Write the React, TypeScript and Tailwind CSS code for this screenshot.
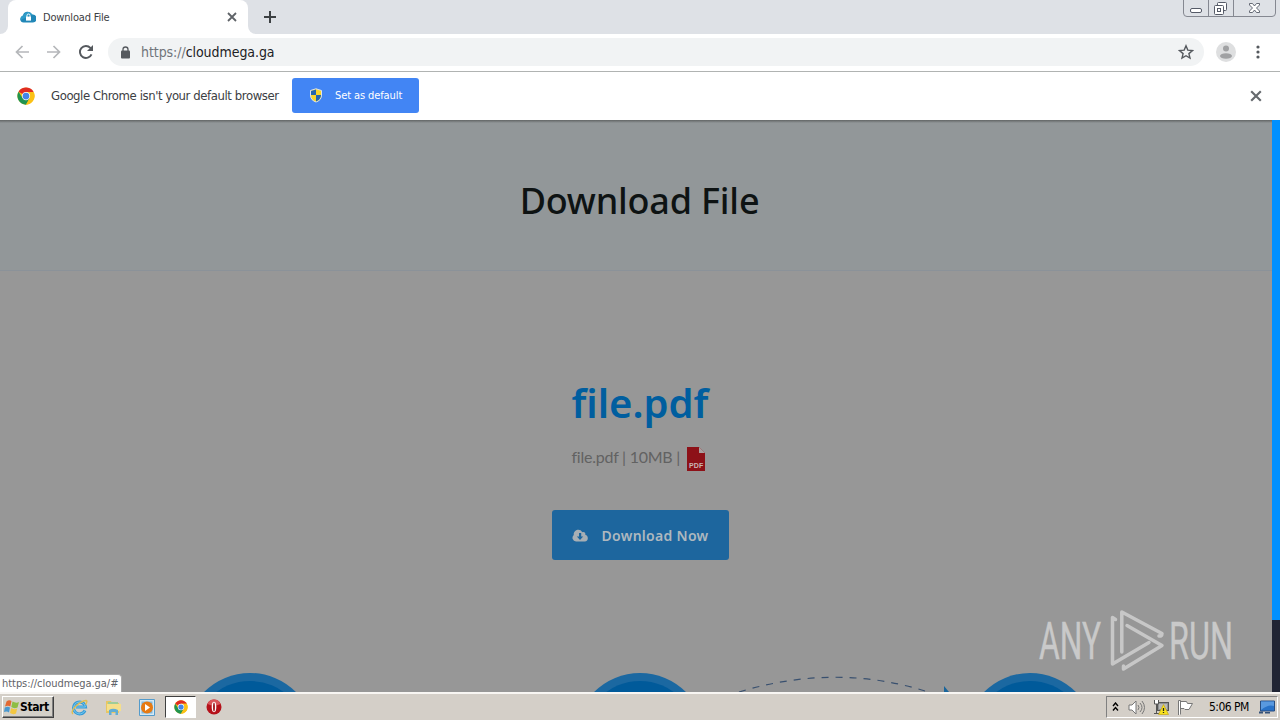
import React from "react";

const ui = "font-['DejaVu_Sans_Condensed','DejaVu_Sans',sans-serif] [font-stretch:condensed]";

function ChromeLogo({ size }: { size: number }) {
  return (
    <svg width={size} height={size} viewBox="0 0 48 48">
      <circle cx="24" cy="24" r="23" fill="#fbc116" />
      <path d="M24 24 4.1 12.5A23 23 0 0 1 43.9 12.5L44 13H24z" fill="#df2c22" />
      <path d="M4.1 12.5A23 23 0 0 0 24 47l10-17.5-10 4.5-9-4.500z" fill="#209450" />
      <path d="M44 13H24l10 16.500L24 47A23 23 0 0 0 44 13z" fill="#fbc116" />
      <circle cx="24" cy="24" r="11" fill="#fff" />
      <circle cx="24" cy="24" r="9" fill="#4285e8" />
    </svg>
  );
}

function Cross({ size, color }: { size: number; color: string }) {
  return (
    <svg width={size} height={size} viewBox="0 0 10 10" fill="none" stroke={color} strokeWidth="1.8">
      <path d="M1 1 9 9M9 1 1 9" />
    </svg>
  );
}

function TabStrip() {
  return (
    <div className="flex h-[34px] bg-[#dee1e6]">
      <div className="flex w-2 items-end bg-white">
        <div className="h-full w-2 rounded-br-lg bg-[#dee1e6]" />
      </div>
      <div className="flex h-full w-60 items-center rounded-t-lg bg-white pl-3 pr-[11px]">
        <svg width="16" height="12" viewBox="0 0 16 12">
          <path d="M3.500 11.500a3.300 3.300 0 0 1-.6-6.500A4.800 4.800 0 0 1 12 3.500a4 4 0 0 1 1 8z" fill="#2187b7" />
          <path d="M.5 9.500C3 7 5 8 7 5.500c2-2 4-2.500 6-1-2-4.500-7.500-5-9.500-.2C1 5 0 7 .5 9.500z" fill="#2f9cc8" />
          <rect x="6" y="5.600" width="5" height="4" fill="#fff" />
          <path d="M7 6V4.500a1.500 1.500 0 0 1 3 0V6" fill="none" stroke="#fff" />
        </svg>
        <span className={`${ui} ml-[7px] flex-1 whitespace-nowrap pt-[2px] text-[11px] tracking-[-0.18px] text-[#3c4043]`}>Download File</span>
        <Cross size={10} color="#5f6368" />
      </div>
      <div className="w-2 bg-white"><div className="h-full rounded-bl-lg bg-[#dee1e6]" /></div>
      <div className="flex flex-1 items-center pl-[7px]">
        <svg width="14" height="14" viewBox="0 0 14 14" stroke="#3c4043" strokeWidth="2"><path d="M7 1v12M1 7h12" /></svg>
      </div>
      <svg className="mr-[3px]" width="94" height="18" viewBox="0 0 94 18" fill="none">
        <path d="M.5 0V13a3.500 3.500 0 0 0 3.500 3.500H89a3.500 3.500 0 0 0 3.500-3.500V0M25.500 0V16M50.500 0V16" stroke="#858891" />
        <rect x="7.500" y="8.500" width="11" height="4" rx="1.500" fill="#fff" stroke="#555a67" />
        <rect x="34.500" y="2.500" width="9" height="8" rx="1" fill="#fff" stroke="#555a67" />
        <rect x="31.500" y="5.500" width="9" height="9" rx="1" fill="#fff" stroke="#555a67" />
        <rect x="34.500" y="8.500" width="3" height="3" stroke="#555a67" />
        <path d="M66.500 3.500h3l2 2.500 2-2.500h3v1.500l-3 3 3 3v1.500h-3l-2-2.500-2 2.500h-3V11l3-3-3-3z" fill="#fff" stroke="#555a67" strokeWidth=".9" />
      </svg>
    </div>
  );
}

function Toolbar() {
  return (
    <div className="flex h-[38px] items-center border-b border-[#b0b3b2] bg-white pb-px pl-[15px] pr-[17px]">
      <svg width="14" height="14" viewBox="0 0 14 14" fill="none" stroke="#b5b7ba" strokeWidth="1.700"><path d="M14 7H1.500M7.500 1l-6 6 6 6" /></svg>
      <svg className="ml-[18px]" width="14" height="14" viewBox="0 0 14 14" fill="none" stroke="#b5b7ba" strokeWidth="1.700"><path d="M0 7h12.500M6.500 1l6 6-6 6" /></svg>
      <svg className="ml-[18px]" width="14" height="14" viewBox="0 0 14 14" fill="none"><path d="M12.500 9.300A6 6 0 1 1 11.400 2.900L13 4.500" stroke="#55595e" strokeWidth="1.900" /><path d="M14 0v6H8z" fill="#55595e" /></svg>
      <div className="ml-[15px] flex h-7 w-[1096px] items-center rounded-full bg-[#f1f3f4] pl-[13px] pr-[10px]">
        <svg width="10" height="13" viewBox="0 0 10 13"><rect y="4.500" width="9" height="8" rx="1" fill="#55595e" /><path d="M2 5V3.500a2.500 2.500 0 0 1 5 0V5" stroke="#55595e" strokeWidth="1.300" fill="none" /></svg>
        <span className={`${ui} ml-[10px] flex-1 whitespace-nowrap text-[14px] tracking-[-0.06px] text-[#202124]`}><span className="text-[#70757a]">https://</span>cloudmega.ga</span>
        <svg width="16" height="16" viewBox="0 0 16 16" fill="none" stroke="#55595e" strokeWidth="1.400"><path d="m8 1.800 1.800 4.300 4.700.4-3.600 3.100 1.100 4.500L8 11.700l-4 2.400 1.100-4.500L1.500 6.500l4.700-.4z" /></svg>
      </div>
      <svg className="ml-3" width="20" height="20" viewBox="0 0 20 20"><circle cx="10" cy="10" r="10" fill="#dedfe0" /><circle cx="10" cy="6.500" r="3" fill="#a0a1a3" /><ellipse cx="10" cy="14" rx="6" ry="2.800" fill="#a0a1a3" /></svg>
      <svg className="ml-auto mr-[3px]" width="4" height="14" viewBox="0 0 4 14" fill="#55595e"><circle cx="2" cy="2" r="1.600" /><circle cx="2" cy="7" r="1.600" /><circle cx="2" cy="12" r="1.600" /></svg>
    </div>
  );
}

function InfoBar() {
  return (
    <div className="flex h-12 items-center bg-white pb-px pl-[17px] pr-[18px]">
      <ChromeLogo size={18} />
      <span className={`${ui} ml-4 w-[241px] whitespace-nowrap text-[13px] tracking-[-0.42px] text-[#3c4043]`}>Google Chrome isn't your default browser</span>
      <button className={`${ui} flex h-[35px] w-[127px] items-center rounded-[3px] bg-[#4285f4] pl-[17px] text-[11px] text-white`}>
        <svg className="mr-3" width="14" height="15" viewBox="0 0 14 15">
          <path d="M7 .8 12.500 2.500V7c0 4-2.500 6-5.500 7C4 13 1.500 11 1.500 7V2.500z" fill="#f8d52a" stroke="#dbe4ee" />
          <path d="M7 1.500V7H2V3zM7 7h5c0 3.500-2.500 5.500-5 6.500z" fill="#2465ad" />
        </svg>
        <span className="whitespace-nowrap pt-[2px] tracking-[-0.1px]">Set as default</span>
      </button>
      <span className="ml-auto"><Cross size={12} color="#666a6e" /></span>
    </div>
  );
}

function Steps() {
  return (
    <svg className="mt-auto block" width="1272" height="20" viewBox="0 672 1272 20">
      {[250, 640, 1030].map((x) => (
        <g key={x}>
          <circle cx={x} cy="738" r="65" fill="#1b68a1" />
          <circle cx={x} cy="738" r="57" fill="#005a9a" />
        </g>
      ))}
      <path d="M739 692Q835 663 925 691" fill="none" stroke="#39506f" strokeWidth="1.200" strokeDasharray="7 7" />
      <path d="m944 686 5 6h-5z" fill="#19659b" />
    </svg>
  );
}

function Page() {
  return (
    <div className="flex h-[572px]">
      <main className="flex w-[1272px] flex-col bg-[#979797]">
        <header className="flex h-[151px] flex-col border-b border-[#8b9299] bg-[#929799]">
          <div className="h-[3px] bg-linear-to-b from-[#626565] to-[#929799]" />
          <h1 className="whitespace-nowrap pl-[7px] pt-[50px] text-center font-['Noto_Sans',sans-serif] text-[36px] font-medium leading-[56px] tracking-[-0.2px] text-[#0e1313]">Download File</h1>
        </header>
        <section className="flex flex-col items-center pl-2 pt-[104px]">
          <h2 className="whitespace-nowrap font-['Noto_Sans',sans-serif] text-[40px] font-semibold leading-[56px] text-[#005e9f]">file.pdf</h2>
          <div className="mt-[15px] flex w-[137px] items-center whitespace-nowrap font-['Lato',sans-serif] text-[16px] leading-6 tracking-[-0.25px] text-[#626262]">
            <span className="-mt-1 w-[115px]">file.pdf | 10MB |</span>
            <svg width="19" height="25" viewBox="0 0 19 25"><path d="M0 1h12l6 6v18H0z" fill="#8d1118" /><path d="m12 1 6 6h-6z" fill="#aaa0a0" /><text x="2" y="22" fontFamily="Liberation Sans" fontSize="7" fontWeight="bold" fill="#c8b4b4" textLength="14">PDF</text></svg>
          </div>
          <button className="mt-[39px] flex h-[50px] w-[177px] items-center rounded-[3px] bg-[#1d669e] pl-5 font-['Noto_Sans',sans-serif] text-[14px] font-semibold text-[#aeb8bf]">
            <svg className="mr-[14px]" width="16" height="13" viewBox="0 0 16 13"><path d="M4 12.500A3.700 3.700 0 0 1 1.800 6C1 1 8-1.500 10.300 3.300 12 2.300 14 4 13.200 5.800 17 6.500 16.500 12.500 12.800 12.500z" fill="#a8afb4" /><path d="M7 4h2.200v3.500h2L8 11 4.800 7.500H7z" fill="#1d669e" /></svg>
            <span className="whitespace-nowrap tracking-[0.3px]">Download Now</span>
          </button>
        </section>
        <Steps />
      </main>
      <aside className="flex w-2 flex-col bg-[#202433]"><div className="h-[500px] bg-[#0090ff]" /></aside>
    </div>
  );
}

function Watermark() {
  return (
    <svg className="absolute left-[1030px] top-[602px] overflow-visible" width="212" height="78" viewBox="1030 602 212 78">
      <g fill="#c9c9c9" stroke="#c9c9c9" strokeWidth=".4" fontFamily="Roboto" fontSize="51">
        <text x="1039" y="659" textLength="62" lengthAdjust="spacingAndGlyphs">ANY</text>
        <text x="1169" y="659" textLength="64" lengthAdjust="spacingAndGlyphs">RUN</text>
      </g>
      <g fill="none" stroke="#c7c7c7" strokeWidth="3.500" strokeLinejoin="round" strokeLinecap="round">
        <path d="M1115.500 619.500 1112.500 617.500V664L1149 642.500" />
        <path d="M1121.800 652V612L1162 633.500Q1162 636.500 1159 636" />
        <path d="M1127 625.500 1162 645.500 1123.500 669V666" />
      </g>
    </svg>
  );
}

function Taskbar() {
  return (
    <footer className="flex h-7 items-center border-t-2 border-[#f8f6f3] bg-[#d4cfc8] pl-[2px] pr-[2px]">
      <button className="flex h-[22px] w-[52px] items-center border border-b-[#404040] border-l-white border-r-[#404040] border-t-white bg-[#d4d0c8] pl-[1px] shadow-[inset_-1px_-1px_#808080]">
        <svg className="shrink-0" width="16" height="16" viewBox="0 0 16 16"><path d="M2.500 2.500Q5 .5 7.500 2L6.300 7.500Q4 6 1 7.500z" fill="#e36933" /><path d="M8.500 2.500Q12 4.500 15 3L13.500 8.500Q10 10 7.300 8z" fill="#8ebd45" /><path d="M.8 8.500Q4 7 6 8.500L5 13.500Q3 12 0 13z" fill="#4a98cf" /><path d="M7.200 9Q10 11 13.200 9.500L12 14.500Q9 16 6 14z" fill="#f3c742" /></svg>
        <span className={`${ui} whitespace-nowrap text-[12px] font-bold tracking-[-0.4px] text-black`}>Start</span>
      </button>
      <svg className="ml-[17px]" width="17" height="17" viewBox="0 0 17 17" fill="none"><path d="M14 11.500A6 6 0 1 1 14.500 8H5" stroke="#369bd7" strokeWidth="3" /><path d="M14 11.500A6 6 0 1 1 14.500 8H5" stroke="#76c9ef" strokeWidth="1" /><path d="M2 15C-2 12 9 2 15 1.500q2 .5-.5 4" stroke="#e1bd51" strokeWidth="1.400" /></svg>
      <svg className="ml-[17px]" width="17" height="17" viewBox="0 0 17 17"><path d="M1 2h5l1 2h7v10H1z" fill="#e7c762" /><path d="M3 3h10v8H3z" fill="#9fcc98" /><path d="M2 5h14v7H2z" fill="#f5df8b" /><path d="M4 16v-5q4-2.500 9 0v5h-2.500v-3h-4v3z" fill="#62add4" /></svg>
      <svg className="ml-[17px]" width="16" height="17" viewBox="0 0 16 17"><path d="M.5.500h15v16H.5z" fill="#d4e9f5" stroke="#549bcb" /><path d="M2.500 2.500h11v12h-11z" fill="#83b7d9" /><circle cx="8" cy="8.500" r="6" fill="#e77a12" /><path d="m6 5 5 3.500L6 12z" fill="#fff" /></svg>
      <div className="ml-[10px] flex h-[22px] w-[31px] items-center justify-center border border-b-white border-l-[#404040] border-r-white border-t-[#404040] bg-white"><ChromeLogo size={14} /></div>
      <svg className="ml-[10px]" width="16" height="16" viewBox="0 0 16 16"><circle cx="8" cy="8" r="7.500" fill="#b5111a" /><path d="M1.500 5a7 7 0 0 1 13 0Q8 8 1.500 5" fill="#da555a" /><ellipse cx="8" cy="8" rx="2.300" ry="5.200" fill="#fff" /><ellipse cx="8" cy="8" rx=".9" ry="4.500" fill="#9d0b13" /></svg>
      <div className="ml-auto flex h-[22px] w-[172px] items-center border border-b-white border-l-[#808080] border-r-white border-t-[#808080] pl-[5px]">
        <svg width="7" height="10" viewBox="0 0 7 10" stroke="#000" strokeWidth="1.400" fill="none"><path d="m1 4 2.500-3L6 4M1 8.500l2.500-3 2.500 3" /></svg>
        <svg className="ml-[9px]" width="18" height="15" viewBox="0 0 18 15" fill="#fff" stroke="#777" strokeWidth="1"><path d="M1 5h3l4-4v13L4 10H1z" /><path d="M10 5q2 2.500 0 5M12 3q4 4.500 0 9M14 1q5 6.500 0 13" fill="none" /></svg>
        <svg className="ml-[7px]" width="16" height="16" viewBox="0 0 16 16"><rect x="4.500" y="3.500" width="11" height="8" fill="#8f9293" stroke="#555" /><rect x="6" y="5" width="8" height="5" fill="#b8b8b8" /><path d="M1.500 1v4h4V1M3.500 5v10M1 14.500h5" fill="#fff" stroke="#555" /><path d="m10.500 5.500 5 10h-10z" fill="#f8e21d" stroke="#c4a619" strokeWidth=".7" /><path d="M10.500 9v3M10.500 13v1" stroke="#222" strokeWidth="1.300" /></svg>
        <svg className="ml-[8px]" width="17" height="15" viewBox="0 0 17 15" fill="#fff" stroke="#777"><path d="M1.500 15V.5h2v14M3.500 1.500h6l1 2h5L12 9.500H8l-1-1H3.500z" /></svg>
        <span className={`${ui} ml-[15px] whitespace-nowrap text-[12px] tracking-[-0.55px] text-black`}>5:06 PM</span>
        <svg className="ml-auto mr-[2px]" width="16" height="15" viewBox="0 0 16 15"><path d="M1.500 1h14v10h-14z" fill="#2872c8" stroke="#284d80" /><path d="M2 1.500h13V6Q9 4 2 10z" fill="#5999df" /><path d="M0 11.500h4v2H0zM6 12h5v1.500H6z" fill="#355279" /></svg>
      </div>
    </footer>
  );
}

export default function App() {
  return (
    <div className="relative h-[720px] w-[1280px] overflow-hidden bg-white">
      <TabStrip />
      <Toolbar />
      <InfoBar />
      <Page />
      <Taskbar />
      <div className={`${ui} absolute left-0 top-[674px] flex h-[18px] w-[122px] items-center whitespace-nowrap rounded-tr-[4px] border-r border-t border-[#a8a8a8] bg-white pl-[2px] pt-px text-[11px] tracking-[-0.05px] text-[#5f6368]`}>https://cloudmega.ga/#</div>
      <Watermark />
    </div>
  );
}
